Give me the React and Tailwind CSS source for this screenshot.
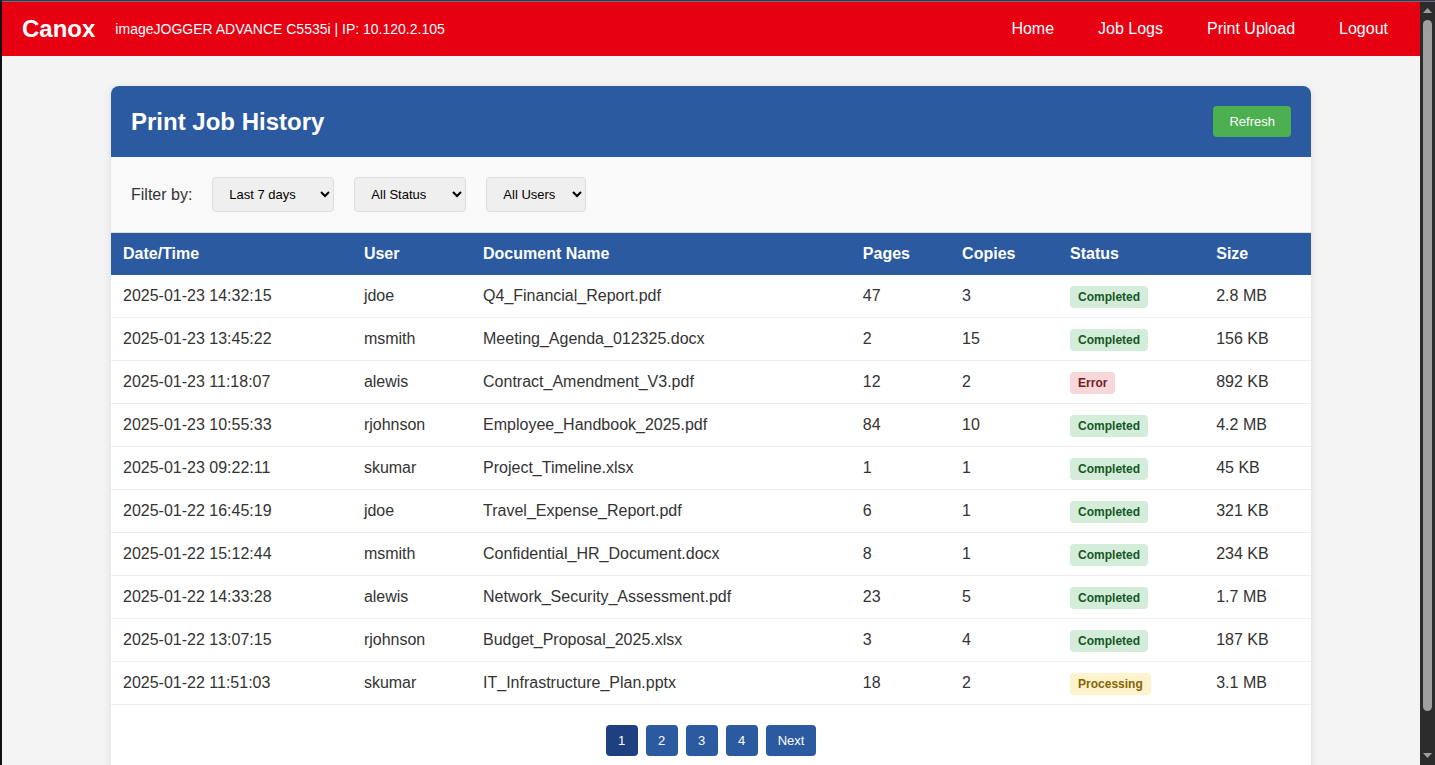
import { useState } from 'react'

const NAV = ['Home', 'Job Logs', 'Print Upload', 'Logout']

const FILTERS = [
  { id: 'period', label: 'Period', width: 'w-[122px]', options: ['Last 7 days', 'Last 30 days', 'All time'] },
  { id: 'status', label: 'Status', width: 'w-[112px]', options: ['All Status', 'Completed', 'Processing', 'Error'] },
  { id: 'user',   label: 'User',   width: 'w-[100px]', options: ['All Users', 'jdoe', 'msmith', 'alewis', 'rjohnson', 'skumar'] },
]

const COLUMNS = ['Date/Time', 'User', 'Document Name', 'Pages', 'Copies', 'Status', 'Size']

const JOBS = [
  { time: '2025-01-23 14:32:15', user: 'jdoe',     doc: 'Q4_Financial_Report.pdf',         pages: 47, copies: 3,  status: 'Completed',  size: '2.8 MB' },
  { time: '2025-01-23 13:45:22', user: 'msmith',   doc: 'Meeting_Agenda_012325.docx',      pages: 2,  copies: 15, status: 'Completed',  size: '156 KB' },
  { time: '2025-01-23 11:18:07', user: 'alewis',   doc: 'Contract_Amendment_V3.pdf',       pages: 12, copies: 2,  status: 'Error',      size: '892 KB' },
  { time: '2025-01-23 10:55:33', user: 'rjohnson', doc: 'Employee_Handbook_2025.pdf',      pages: 84, copies: 10, status: 'Completed',  size: '4.2 MB' },
  { time: '2025-01-23 09:22:11', user: 'skumar',   doc: 'Project_Timeline.xlsx',           pages: 1,  copies: 1,  status: 'Completed',  size: '45 KB'  },
  { time: '2025-01-22 16:45:19', user: 'jdoe',     doc: 'Travel_Expense_Report.pdf',       pages: 6,  copies: 1,  status: 'Completed',  size: '321 KB' },
  { time: '2025-01-22 15:12:44', user: 'msmith',   doc: 'Confidential_HR_Document.docx',   pages: 8,  copies: 1,  status: 'Completed',  size: '234 KB' },
  { time: '2025-01-22 14:33:28', user: 'alewis',   doc: 'Network_Security_Assessment.pdf', pages: 23, copies: 5,  status: 'Completed',  size: '1.7 MB' },
  { time: '2025-01-22 13:07:15', user: 'rjohnson', doc: 'Budget_Proposal_2025.xlsx',       pages: 3,  copies: 4,  status: 'Completed',  size: '187 KB' },
  { time: '2025-01-22 11:51:03', user: 'skumar',   doc: 'IT_Infrastructure_Plan.pptx',     pages: 18, copies: 2,  status: 'Processing', size: '3.1 MB' },
]

const BADGES = {
  Completed:  'bg-[#d4edda] text-[#155724]',
  Error:      'bg-[#f8d7da] text-[#721c24]',
  Processing: 'bg-[#fff3cd] text-[#856404]',
}

function Header() {
  return (
    <header className="flex items-center justify-between bg-[#e60012] px-5 py-2.5 text-white">
      <div className="flex items-center gap-5">
        <div className="text-2xl leading-7 font-bold">Canox</div>
        <div className="text-sm">imageJOGGER ADVANCE C5535i | IP: 10.120.2.105</div>
      </div>
      <nav className="flex gap-5">
        {NAV.map(item => (
          <a key={item} href="#" className="rounded px-3 py-2 leading-[18px] hover:bg-white/20">{item}</a>
        ))}
      </nav>
    </header>
  )
}

function Filters() {
  return (
    <div className="flex items-center gap-5 border-b border-[#dddddd] bg-[#f9f9f9] p-5">
      <span>Filter by:</span>
      {FILTERS.map(f => (
        <select key={f.id} aria-label={f.label}
          className={`${f.width} h-[35px] rounded border border-[#dddddd] bg-[#efefef] px-3 text-[13px] text-black`}>
          {f.options.map(o => <option key={o}>{o}</option>)}
        </select>
      ))}
    </div>
  )
}

function JobTable() {
  return (
    <table className="w-full border-collapse text-left leading-[18px]">
      <thead>
        <tr className="bg-[#2b5aa0] text-white">
          {COLUMNS.map(c => <th key={c} className="p-3 font-bold">{c}</th>)}
        </tr>
      </thead>
      <tbody>
        {JOBS.map(job => (
          <tr key={job.time} className="border-b border-[#eeeeee] hover:bg-[#f5f5f5]">
            <td className="p-3">{job.time}</td>
            <td className="p-3">{job.user}</td>
            <td className="p-3">{job.doc}</td>
            <td className="p-3">{job.pages}</td>
            <td className="p-3">{job.copies}</td>
            <td className="p-3">
              <span className={`rounded px-2 py-1 text-xs leading-none font-bold ${BADGES[job.status]}`}>{job.status}</span>
            </td>
            <td className="p-3">{job.size}</td>
          </tr>
        ))}
      </tbody>
    </table>
  )
}

function Pagination() {
  const [page, setPage] = useState(1)
  return (
    <div className="flex justify-center gap-2 p-5 text-[13px] leading-[15px] text-white">
      {[1, 2, 3, 4].map(n => (
        <button key={n} onClick={() => setPage(n)}
          className={`min-w-8 rounded px-3 py-2 ${n === page ? 'bg-[#1e3f80]' : 'bg-[#2b5aa0]'}`}>
          {n}
        </button>
      ))}
      <button onClick={() => setPage(p => Math.min(p + 1, 4))} className="rounded bg-[#2b5aa0] px-3 py-2">Next</button>
    </div>
  )
}

function ScrollTrack() {
  return (
    <div className="flex w-[15px] shrink-0 flex-col items-center bg-[#2c2c2c]" aria-hidden="true">
      <svg className="h-[18px] w-[9px] shrink-0" viewBox="0 0 9 18" fill="#9f9f9f">
        <path d="M0 11 L4.5 6 L9 11 Z" />
      </svg>
      <div className="min-h-0 w-full flex-1">
        <div className="mx-auto h-[95%] w-[9px] rounded-full bg-[#9f9f9f]" />
      </div>
      <svg className="h-[18px] w-[9px] shrink-0" viewBox="0 0 9 18" fill="#9f9f9f">
        <path d="M0 6 L4.5 11 L9 6 Z" />
      </svg>
    </div>
  )
}

export default function App() {
  return (
    <div className="flex h-screen flex-col border-l-2 border-[#111115] font-['Liberation_Sans',Arial,sans-serif] text-[#333333]">
      {/* Window edge */}
      <div className="h-0.5 shrink-0 border-b border-[#6c6c7c] bg-[#3a3a4a]" />

      <div className="flex min-h-0 flex-1">
        <div className="flex-1 overflow-y-auto bg-[#f4f4f4] [scrollbar-width:none]">
          <Header />
          <main className="mx-auto my-[30px] max-w-[1200px] overflow-hidden rounded-lg bg-white shadow-[0_2px_10px_rgba(0,0,0,0.1)]">
            <div className="flex items-center justify-between bg-[#2b5aa0] p-5 text-white">
              <h1 className="text-2xl leading-7 font-bold">Print Job History</h1>
              <button className="rounded bg-[#4caf50] px-4 py-2 text-[13px] leading-[15px]">Refresh</button>
            </div>
            <Filters />
            <JobTable />
            <Pagination />
          </main>
        </div>
        <ScrollTrack />
      </div>
    </div>
  )
}
